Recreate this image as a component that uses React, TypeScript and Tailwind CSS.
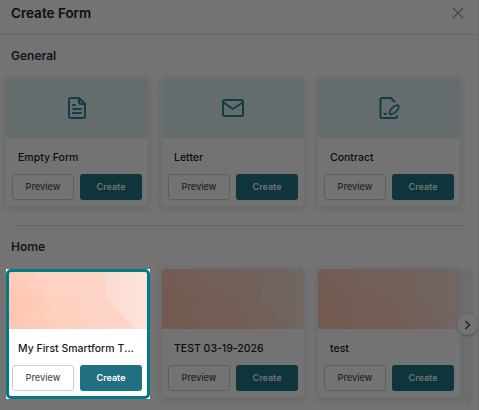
import React, { useId } from "react";

type CardProps = {
  title: string;
  icon?: React.ReactNode;
  active?: boolean;
};

const stroke = {
  fill: "none",
  stroke: "currentColor",
  strokeWidth: 2,
  strokeLinecap: "round" as const,
  strokeLinejoin: "round" as const,
};

function FileIcon() {
  return (
    <svg width="24" height="24" viewBox="0 0 24 24" {...stroke}>
      <path d="M14 2H6a2 2 0 0 0-2 2v16a2 2 0 0 0 2 2h12a2 2 0 0 0 2-2V8z" />
      <path d="M14 2.500V6a2 2 0 0 0 2 2h3.500" />
      <path d="M8 9h2M8 13h8M8 17h8" />
    </svg>
  );
}

function MailIcon() {
  return (
    <svg width="24" height="24" viewBox="0 0 24 24" {...stroke}>
      <rect x="2" y="4" width="20" height="16" rx="1.5" />
      <path d="M2.500 6.500 12 13l9.500-6.500" />
    </svg>
  );
}

function ContractIcon() {
  return (
    <svg width="24" height="24" viewBox="0 0 24 24" {...stroke}>
      <path d="M17.500 5.500 14 2H5a1.500 1.500 0 0 0-1.500 1.500v17A1.500 1.500 0 0 0 5 22h13a2 2 0 0 0 2-2" />
      <path
        d="M12.800 18.200c-.6-2.400.4-4.500 2.600-6.500s4.900-3.100 5.900-2.100-.1 3.700-2.100 5.900-4 3.300-6.400 2.700z"
        strokeWidth="1.8"
      />
      <path d="M7.500 18h1.500" />
    </svg>
  );
}

function Artwork() {
  const id = useId();
  return (
    <svg className="block size-full" viewBox="0 0 142 60" preserveAspectRatio="none">
      <defs>
        <linearGradient id={`${id}base`} x1="0" y1="0.5" x2="1" y2="0.3">
          <stop offset="0" stopColor="#ffc8b3" />
          <stop offset="0.3" stopColor="#fed0bf" />
          <stop offset="0.7" stopColor="#fdd5c7" />
          <stop offset="1" stopColor="#fddbd0" />
        </linearGradient>
        <linearGradient id={`${id}glow`} x1="0" y1="0" x2="1" y2="0">
          <stop offset="0" stopColor="#fcdcd1" />
          <stop offset="1" stopColor="#fce3dc" />
        </linearGradient>
        <filter id={`${id}soft`}>
          <feGaussianBlur stdDeviation="2" />
        </filter>
      </defs>
      <rect width="142" height="60" fill={`url(#${id}base)`} />
      <path d="M-4 18 38 29 22 42-4 60z" fill="#ffc3ac" opacity=".45" filter={`url(#${id}soft)`} />
      <path d="M30-4h62l-16 24-36 8z" fill="#fed6c8" opacity=".4" filter={`url(#${id}soft)`} />
      <path d="M99 0h43v60h-14C118 44 101 34 100 25z" fill={`url(#${id}glow)`} />
    </svg>
  );
}

function FormCard({ title, icon, active }: CardProps) {
  return (
    <div
      className={`relative flex h-[130px] w-36 shrink-0 flex-col rounded-[5px] border ${
        active
          ? "border-transparent bg-white bg-clip-padding"
          : "border-[#6b6e70] bg-[#737373] shadow-[0_2px_6px_rgba(0,0,0,0.12)]"
      }`}
    >
      <div
        className={`flex h-[60px] shrink-0 items-center justify-center overflow-hidden rounded-t-[4px] text-[#0f3d44] ${
          icon ? "bg-[#656c6d]" : ""
        }`}
      >
        {icon ?? (
          <div className={`size-full ${active ? "" : "brightness-[0.45]"}`}>
            <Artwork />
          </div>
        )}
      </div>
      <div
        className={`mt-3 truncate px-3 text-[10.500px] leading-4 font-medium ${
          active ? "text-[#161b26]" : "text-[#0a0c12]"
        }`}
      >
        {title}
      </div>
      <div className="mt-2 flex gap-1.5 px-1.5">
        <button
          className={`h-[26px] w-[62px] rounded-[3px] border text-[9.200px] font-medium ${
            active ? "border-[#cbd0d6] text-[#4b5563]" : "border-[#5c5e60] text-[#22262d]"
          }`}
        >
          Preview
        </button>
        <button
          className={`h-[26px] w-[62px] rounded-[3px] text-[9px] font-semibold ${
            active ? "bg-[#207082] text-white" : "bg-[#0f353c] text-[#737373]"
          }`}
        >
          Create
        </button>
      </div>
      {/* Spotlight frame, square white corners behind a rounded border */}
      {active && (
        <div className="absolute top-0 -right-0.5 -bottom-0.5 left-0 border-3 border-white">
          <div className="absolute -inset-[3px] rounded-[5px] border-3 border-[#007888]" />
        </div>
      )}
    </div>
  );
}

export default function App() {
  return (
    <div className="h-[410px] w-[479px] overflow-hidden border-r border-[#6b6b6b] bg-[#737373] font-['Inter',sans-serif]">
      {/* Header */}
      <header className="flex h-[35px] items-center justify-between border-b border-[#656769] pr-3.5 pb-2 pl-[11px]">
        <h1 className="text-[13.500px] font-semibold text-[#0a0d14]">Create Form</h1>
        <svg width="12" height="12" viewBox="0 0 12 12" stroke="#41464c" strokeWidth="1.3">
          <path d="M1 1l10 10M11 1L1 11" />
        </svg>
      </header>

      {/* General */}
      <section className="pt-[13px]">
        <h2 className="pl-[11px] text-xs leading-4 font-semibold text-[#12151d]">General</h2>
        <div className="mt-[13px] flex gap-3 pl-[5px]">
          <FormCard title="Empty Form" icon={<FileIcon />} />
          <FormCard title="Letter" icon={<MailIcon />} />
          <FormCard title="Contract" icon={<ContractIcon />} />
        </div>
      </section>

      <hr className="mt-[18px] mr-[11px] ml-[11px] border-[#656769]" />

      {/* Home */}
      <section className="relative pt-[13px]">
        <h2 className="pl-[11px] text-xs leading-4 font-semibold text-[#12151d]">Home</h2>
        <div className="mt-[13px] mr-[5px] flex h-[136px] gap-3 rounded-r-[6px] bg-linear-to-r from-[#737373] from-96% to-[#696b6c] pl-[5px]">
          <FormCard title="My First Smartform Title" active />
          <FormCard title="TEST 03-19-2026" />
          <FormCard title="test" />
        </div>
        <button className="absolute top-[88px] right-0 flex size-[21px] items-center justify-center rounded-full bg-[#737373] shadow-[0_1px_3px_rgba(0,0,0,0.25)]">
          <svg width="7" height="10" viewBox="0 0 7 10" fill="none" stroke="#20242b" strokeWidth="1.5">
            <path d="M1.500 1l4 4-4 4" />
          </svg>
        </button>
      </section>
    </div>
  );
}
